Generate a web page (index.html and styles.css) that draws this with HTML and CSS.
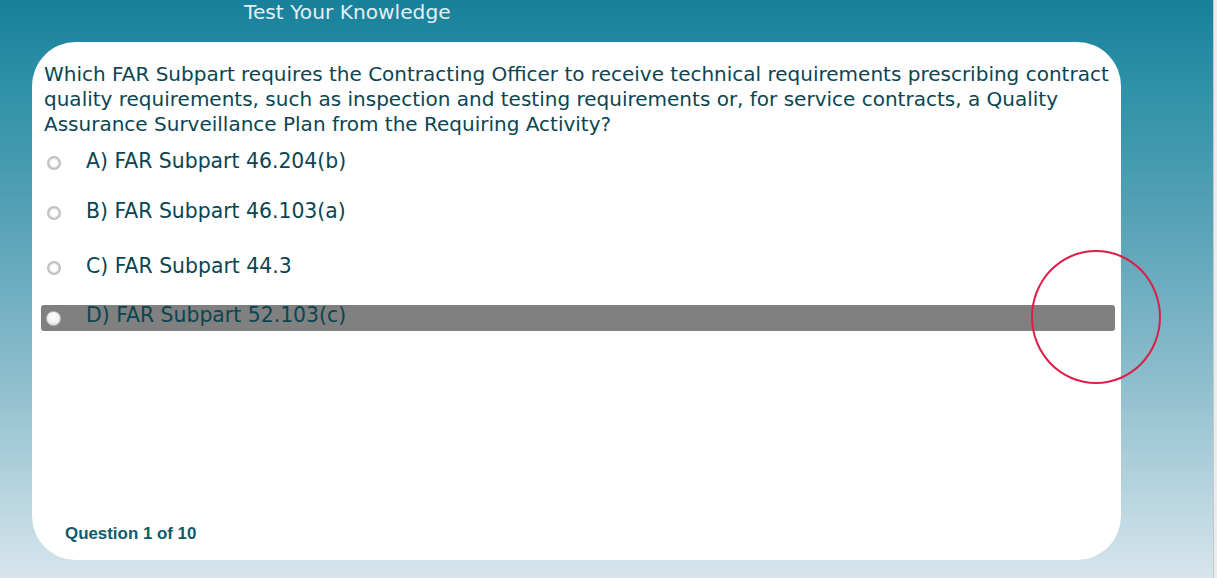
FILE: index.html
```html
<!DOCTYPE html>
<html>
<head>
<meta charset="utf-8">
<link rel="stylesheet" href="styles.css">
</head>
<body>
<div class="screen">
  <div class="stage">
    <div class="title">Test Your Knowledge</div>
    <div class="card">
      <p class="question">Which FAR Subpart requires the Contracting Officer to receive technical requirements prescribing contract quality requirements, such as inspection and testing requirements or, for service contracts, a Quality Assurance Surveillance Plan from the Requiring Activity?</p>
      <div class="options">
        <div class="option opt-a"><span class="radio"></span><span class="label">A) FAR Subpart 46.204(b)</span></div>
        <div class="option opt-b"><span class="radio"></span><span class="label">B) FAR Subpart 46.103(a)</span></div>
        <div class="option opt-c"><span class="radio"></span><span class="label">C) FAR Subpart 44.3</span></div>
        <div class="option opt-d selected"><span class="radio"></span><span class="label">D) FAR Subpart 52.103(c)</span><span class="cursor-ring"></span></div>
      </div>
      <div class="counter">Question 1 of 10</div>
    </div>
  </div>
  <div class="edge"></div>
</div>
</body>
</html>
```
FILE: styles.css
```css
html, body {
  margin: 0;
  padding: 0;
  width: 1217px;
  height: 578px;
  overflow: hidden;
}
.screen {
  display: flex;
  width: 1217px;
  height: 578px;
}
.stage {
  width: 1213px;
  height: 578px;
  background: linear-gradient(to bottom, #17809a 0%, #2a8ea6 12%, #5aa4b8 40%, #8cbdcc 65%, #b6d4df 85%, #d7e5ec 100%);
  padding: 0 0 0 32px;
  box-sizing: border-box;
  display: flex;
  flex-direction: column;
  font-family: "DejaVu Sans", Verdana, sans-serif;
}
.edge {
  width: 4px;
  height: 578px;
  background: #ececec;
  border-left: 1px solid #c8c8c8;
  box-sizing: border-box;
}
.title {
  height: 42px;
  margin-left: 212px;
  color: #e3eff2;
  font-size: 20.2px;
  line-height: 24px;
}
.card {
  width: 1089px;
  height: 518px;
  background: #ffffff;
  border-radius: 44px;
  box-sizing: border-box;
  padding: 20px 0 0 12px;
  display: flex;
  flex-direction: column;
  position: relative;
}
.question {
  margin: 0;
  color: #0b4552;
  font-size: 20px;
  line-height: 25px;
  width: 1075px;
}
.options {
  margin-top: 10px;
  display: flex;
  flex-direction: column;
}
.option {
  display: flex;
  align-items: center;
  height: 26px;
  color: #0b4552;
  font-size: 20.4px;
  position: relative;
  margin-left: -3px;
  width: 1074px;
  border-radius: 3px;
}
.opt-a { margin-top: 1px; }
.opt-b { margin-top: 24px; }
.opt-c { margin-top: 29px; }
.opt-d { margin-top: 26px; }
.option.selected {
  background: #808080;
  align-items: flex-start;
}
.option.selected .label { line-height: 20px; }
.radio {
  width: 14px;
  height: 14px;
  border-radius: 50%;
  background: radial-gradient(circle at 50% 50%, #ffffff 0%, #ffffff 34%, #e2e2e2 44%, #b8b8b8 62%, #d0d0d0 80%, #efefef 100%);
  box-sizing: border-box;
  margin: 4px 0 0 6px;
}
.option.selected .radio {
  width: 15px;
  height: 15px;
  border: 1px solid #bdbdbd;
  background: radial-gradient(circle at 50% 35%, #ffffff 0%, #f3f3f3 50%, #d6d6d6 100%);
  margin: 6px 0 0 5px;
}
.label {
  margin-left: 25px;
}
.option.selected .label { margin-left: 25px; }
.cursor-ring {
  position: absolute;
  left: 990px;
  top: -55px;
  width: 130px;
  height: 134px;
  border: 2.5px solid #dc1f48;
  border-radius: 50%;
  box-sizing: border-box;
}
.counter {
  margin-top: auto;
  margin-bottom: 16px;
  margin-left: 21px;
  font-family: "Liberation Sans", Arial, sans-serif;
  font-weight: bold;
  font-size: 16.9px;
  color: #0e5a6a;
}
```
